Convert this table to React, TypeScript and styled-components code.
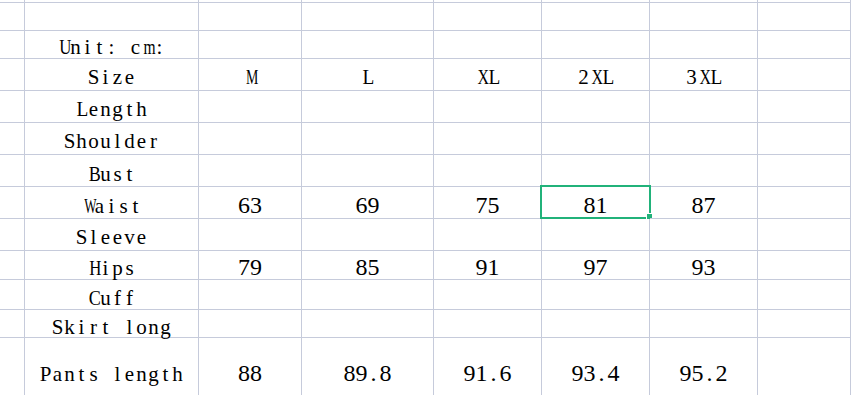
import React from 'react';
import styled, { createGlobalStyle } from 'styled-components';

const GlobalStyle = createGlobalStyle`
  html, body {
    margin: 0;
    padding: 0;
    background: #ffffff;
  }
  body {
    overflow: hidden;
  }
`;

const GRID = '#c6cbdb';
const GREEN = '#21b27a';
const COLS = [25, 174, 103, 132, 108, 108, 108];

type Row = {
  h: number;
  b: number;
  label?: string;
  vals?: string[];
  head?: boolean;
};

const ROWS: Row[] = [
  { h: 3, b: 0 },
  { h: 28, b: 0 },
  { h: 28, b: 4, label: 'Unit: cm:' },
  { h: 32, b: 6, label: 'Size', vals: ['M', 'L', 'XL', '2XL', '3XL'], head: true },
  { h: 32, b: 6, label: 'Length' },
  { h: 32, b: 6, label: 'Shoulder' },
  { h: 32, b: 5, label: 'Bust' },
  { h: 32, b: 5, label: 'Waist', vals: ['63', '69', '75', '81', '87'] },
  { h: 32, b: 6, label: 'Sleeve' },
  { h: 29, b: 4, label: 'Hips', vals: ['79', '85', '91', '97', '93'] },
  { h: 30, b: 4, label: 'Cuff' },
  { h: 28, b: 3, label: 'Skirt long' },
  { h: 60, b: 16, label: 'Pants length', vals: ['88', '89.8', '91.6', '93.4', '95.2'] },
];

// selected cell: Waist / 2XL
const SEL_ROW = 7;
const SEL_COL = 5;

// the sheet font is a half-width serif; wide serif letters get squeezed into the 12px slot
const SQUEEZE: Record<string, number> = {
  M: 0.66,
  W: 0.62,
  X: 0.76,
  U: 0.8,
  H: 0.8,
  B: 0.86,
  C: 0.86,
  L: 0.92,
  m: 0.74,
  w: 0.8,
};

const Sheet = styled.div<{ $rows: string }>`
  display: grid;
  grid-template-columns: ${COLS.map((c) => c + 'px').join(' ')} 1fr;
  grid-template-rows: ${(p) => p.$rows};
  width: 851px;
  height: 395px;
  overflow: hidden;
  background: #ffffff;
`;

const Cell = styled.div<{ $num?: boolean; $bottom: number }>`
  position: relative;
  box-sizing: border-box;
  min-width: 0;
  border-right: 1px solid ${GRID};
  border-bottom: 1px solid ${GRID};
  display: flex;
  align-items: flex-end;
  justify-content: center;
  white-space: nowrap;
  color: #000000;
  font-family: "Liberation Serif", "Times New Roman", serif;
  font-size: ${(p) => (p.$num ? 24 : 21)}px;
  line-height: 12px;
  padding-bottom: ${(p) => p.$bottom + (p.$num ? 2.1 : 1.1)}px;
`;

const Ch = styled.span<{ $squeeze?: number }>`
  display: inline-block;
  width: 12px;
  text-align: center;
  transform: scaleX(${(p) => p.$squeeze ?? 1});
`;

const Selection = styled.div`
  position: absolute;
  left: -2px;
  top: -2px;
  right: -2px;
  bottom: -1px;
  border: 2px solid ${GREEN};
  pointer-events: none;
`;

const FillHandle = styled.div`
  position: absolute;
  right: -4px;
  bottom: -3px;
  width: 5px;
  height: 5px;
  background: ${GREEN};
  border: 1px solid #ffffff;
`;

function HalfWidth({ text }: { text: string }) {
  return (
    <span>
      {text.split('').map((c, i) => (
        <Ch key={i} $squeeze={SQUEEZE[c]}>
          {c === ' ' ? '\u00a0' : c}
        </Ch>
      ))}
    </span>
  );
}

export default function App() {
  const rowsTemplate = ROWS.map((r) => r.h + 'px').join(' ');

  return (
    <>
      <GlobalStyle />
      <Sheet $rows={rowsTemplate}>
        {ROWS.map((row, ri) =>
          Array.from({ length: COLS.length + 1 }).map((_, ci) => {
            let text = '';
            let num = false;
            if (ci === 1 && row.label) text = row.label;
            if (ci >= 2 && ci <= 6 && row.vals) {
              text = row.vals[ci - 2];
              num = !row.head;
            }
            const selected = ri === SEL_ROW && ci === SEL_COL;
            return (
              <Cell key={ri + '-' + ci} $num={num} $bottom={row.b}>
                {text && <HalfWidth text={text} />}
                {selected && (
                  <Selection>
                    <FillHandle />
                  </Selection>
                )}
              </Cell>
            );
          })
        )}
      </Sheet>
    </>
  );
}
